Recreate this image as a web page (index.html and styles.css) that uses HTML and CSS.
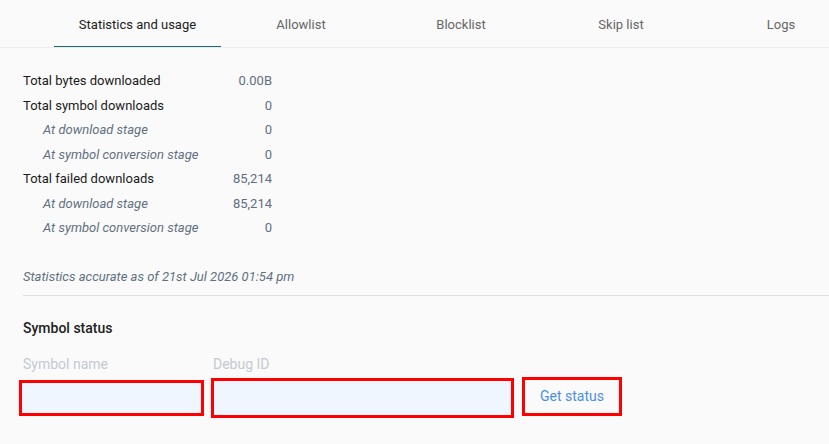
FILE: index.html
```html
<!DOCTYPE html>
<html lang="en">
<head>
    <meta charset="UTF-8">
    <meta name="viewport" content="width=device-width, initial-scale=1.0">
    <title>Symbol Server - Statistics and usage</title>
    <link rel="stylesheet" href="styles.css">
</head>
<body>
    <!-- Tab strip, wider than the window on small screens -->
    <nav class="tabs">
        <a class="tab tab-active" href="#">Statistics and usage</a>
        <a class="tab" href="#">Allowlist</a>
        <a class="tab" href="#">Blocklist</a>
        <a class="tab" href="#">Skip list</a>
        <a class="tab" href="#">Logs</a>
    </nav>

    <main class="content">
        <div class="stats">
            <div class="stat-row">
                <span class="stat-label">Total bytes downloaded</span>
                <span class="stat-value">0.00B</span>
            </div>
            <div class="stat-row">
                <span class="stat-label">Total symbol downloads</span>
                <span class="stat-value">0</span>
            </div>
            <div class="stat-row stat-sub">
                <span class="stat-label">At download stage</span>
                <span class="stat-value">0</span>
            </div>
            <div class="stat-row stat-sub">
                <span class="stat-label">At symbol conversion stage</span>
                <span class="stat-value">0</span>
            </div>
            <div class="stat-row">
                <span class="stat-label">Total failed downloads</span>
                <span class="stat-value">85,214</span>
            </div>
            <div class="stat-row stat-sub">
                <span class="stat-label">At download stage</span>
                <span class="stat-value">85,214</span>
            </div>
            <div class="stat-row stat-sub">
                <span class="stat-label">At symbol conversion stage</span>
                <span class="stat-value">0</span>
            </div>
        </div>

        <p class="stats-note">Statistics accurate as of 21st Jul 2026 01:54 pm</p>

        <hr class="divider">

        <h3 class="section-title">Symbol status</h3>

        <form class="status-form" onsubmit="return false;">
            <label class="field-label" for="symbol-name">Symbol name</label>
            <label class="field-label field-label-id" for="debug-id">Debug ID</label>
            <span></span>
            <input class="field-input field-name" id="symbol-name" type="text">
            <input class="field-input field-id" id="debug-id" type="text">
            <button class="status-btn" type="submit">Get status</button>
        </form>
    </main>
</body>
</html>
```

FILE: styles.css
```css
body {
    font-family: Roboto, "Liberation Sans", Arial, sans-serif;
    font-size: 13px;
    margin: 0;
    background-color: #fafafa;
    color: #212121;
}

/* Tabs */
.tabs {
    display: flex;
    height: 47px;
    padding-left: 54px;
    border-bottom: 1px solid #ececec;
    overflow: hidden;
}

.tab {
    flex: 0 0 160px;
    position: relative;
    text-align: center;
    line-height: 49px;
    color: #666;
    text-decoration: none;
}

.tab-active {
    flex-basis: 167px;
    color: #212121;
}

.tab-active::after {
    content: "";
    position: absolute;
    left: 0;
    right: 0;
    bottom: -1px;
    height: 2px;
    background-color: #1b6b6e;
}

/* Statistics */
.content {
    padding: 21px 0 0 23px;
}

.stat-row {
    display: flex;
    justify-content: space-between;
    width: 249px;
    height: 24.5px;
    line-height: 24.5px;
}

.stat-label {
    color: #1a1a1a;
}

.stat-value {
    color: #617080;
}

.stat-sub .stat-label {
    padding-left: 20px;
    font-style: italic;
    color: #617080;
}

.stats-note {
    margin: 26px 0 0;
    line-height: 20px;
    font-style: italic;
    color: #617080;
}

.divider {
    margin: 8px 0 0;
    border: none;
    border-top: 1px solid #e2e2e2;
}

/* Symbol status form */
.section-title {
    margin: 22px 0 0;
    font-size: 14px;
    font-weight: 500;
    line-height: 20px;
}

.status-form {
    display: grid;
    grid-template-columns: 185px 303px 100px;
    column-gap: 7px;
    row-gap: 3px;
    align-items: start;
    margin: 16px 0 0 -4px;
}

.field-label {
    padding-left: 4px;
    line-height: 20px;
    font-size: 14px;
    color: #c3cad2;
}

.field-label-id {
    padding-left: 2px;
}

.field-input {
    box-sizing: border-box;
    height: 36px;
    margin: 3px 0 0;
    border: 3px solid #ff0000;
    background-color: #eff6ff;
    font: inherit;
}

.field-id {
    height: 40px;
    margin-top: 1px;
}

.status-btn {
    box-sizing: border-box;
    width: 100px;
    height: 39px;
    margin: 0 0 0 1px;
    border: 3px solid #ff0000;
    background-color: #fafafa;
    color: #4a8fe7;
    font-family: inherit;
    font-size: 14px;
    cursor: pointer;
}
```
